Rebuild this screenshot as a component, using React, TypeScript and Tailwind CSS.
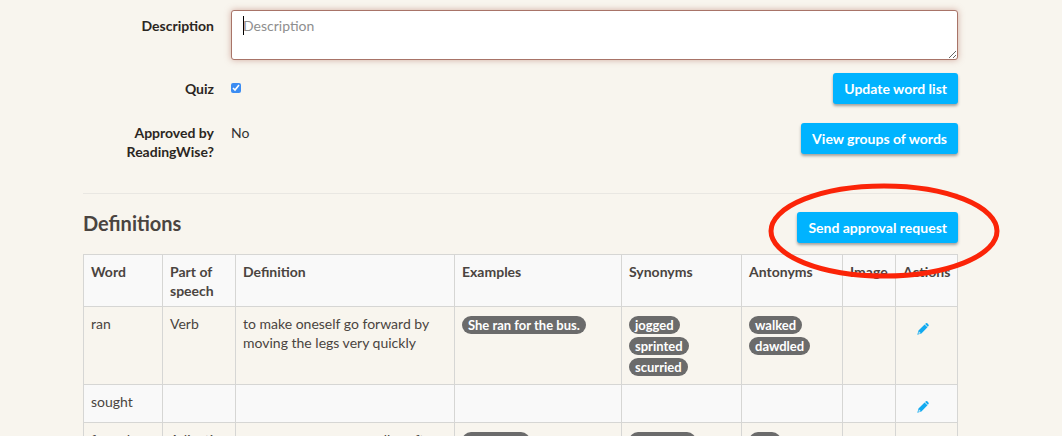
import type { ReactNode } from "react";

const entries = [
  {
    word: "ran",
    part: "Verb",
    definition: "to make oneself go forward by moving the legs very quickly",
    examples: ["She ran for the bus."],
    synonyms: ["jogged", "sprinted", "scurried"],
    antonyms: ["walked", "dawdled"],
  },
  {
    word: "sought",
    part: "",
    definition: "",
    examples: [],
    synonyms: [],
    antonyms: [],
  },
  {
    word: "feared",
    part: "Adjective",
    definition: "nervous or even mentally soft",
    examples: ["for a duet"],
    synonyms: ["unnerved"],
    antonyms: ["hot"],
  },
];

function Button({ children }: { children: ReactNode }) {
  return (
    <button
      type="button"
      className="h-[31px] rounded-[3px] bg-[#00b3ff] px-[11px] text-sm font-bold text-white shadow-[0_2px_3px_rgba(0,0,0,0.35)]"
    >
      {children}
    </button>
  );
}

function Tags({ items }: { items: string[] }) {
  return (
    <div className="flex flex-col items-start gap-[3px] pt-[2px]">
      {items.map((item) => (
        <span
          key={item}
          className="rounded-[9px] bg-[#6b6b6b] px-[6px] text-[13px] leading-[18px] font-bold whitespace-nowrap text-white"
        >
          {item}
        </span>
      ))}
    </div>
  );
}

function Pencil() {
  return (
    <svg viewBox="0 0 12 12" className="size-3" aria-hidden="true">
      <path
        fill="#12aaf0"
        fillRule="evenodd"
        d="M8.1.9 8.9.3Q9.8-.2 10.6.6l.8.8q.7.8.1 1.6l-.7.8ZM7.6 1.4l2.9 2.9-6.1 6.1L.3 11.7l1.2-4.2ZM1.9 8.7l-.5 1.7.4.4 1.6-.5-.1-.7-.8-.1-.1-.7Z"
      />
    </svg>
  );
}

export default function App() {
  return (
    <div className="h-screen overflow-hidden bg-[#f8f5ee] pt-[10px] pr-[104px] pl-[83px] font-[Lato,sans-serif] text-sm leading-[19px] text-[#4a4440]">
      <form className="grid grid-cols-[131px_1fr_auto] gap-x-[17px] text-[#333]">
        <label
          htmlFor="description"
          className="pt-[6px] text-right font-bold text-[#2b2622]"
        >
          Description
        </label>
        <div className="relative col-span-2">
          <textarea
            id="description"
            placeholder="Description"
            className="block h-[50px] w-full resize rounded-[3px] border border-[#a87468] bg-white px-[11px] py-[5px] shadow-[0_0_6px_rgba(176,100,85,0.5)] outline-none placeholder:text-[#8e8e8e]"
          />
          <span className="absolute top-[6px] left-3 h-[19px] w-px bg-black" />
        </div>

        <label
          htmlFor="quiz"
          className="mt-[13px] pt-[6px] text-right font-bold text-[#2b2622]"
        >
          Quiz
        </label>
        <div className="mt-[13px] pt-[10px]">
          <input
            id="quiz"
            type="checkbox"
            defaultChecked
            className="block size-[10px] accent-[#3b8cf2]"
          />
        </div>
        <div className="mt-[13px] text-right">
          <Button>Update word list</Button>
        </div>

        <div className="mt-[19px] text-right font-bold text-[#2b2622]">
          Approved by ReadingWise?
        </div>
        <div className="mt-[19px]">No</div>
        <div className="mt-[19px] text-right">
          <Button>View groups of words</Button>
        </div>
      </form>

      <hr className="mt-8 border-[#e9e7e2]" />

      <div className="mt-[18px] flex items-start justify-between">
        <h2 className="text-xl leading-[22px] font-bold">Definitions</h2>
        <div className="relative">
          <Button>Send approval request</Button>
          <svg
            viewBox="0 0 232 98"
            className="pointer-events-none absolute -top-[30px] -right-[42px] h-[98px] w-[232px]"
            aria-hidden="true"
          >
            <ellipse
              cx="116"
              cy="49"
              rx="113"
              ry="45"
              fill="none"
              stroke="#fb2408"
              strokeWidth="5"
            />
          </svg>
        </div>
      </div>

      <table className="mt-[11px] w-full table-fixed border-collapse [&_td]:border [&_td]:border-[#d6d6d4] [&_td]:px-[7px] [&_td]:pt-[7px] [&_td]:pb-2 [&_td]:align-top [&_th]:border [&_th]:border-[#d6d6d4] [&_th]:px-[7px] [&_th]:pt-[7px] [&_th]:pb-[6px] [&_th]:text-left [&_th]:align-top">
        <thead>
          <tr className="bg-[#f9f9f9]">
            <th className="w-[79px]">Word</th>
            <th className="w-[73px]">Part of speech</th>
            <th>Definition</th>
            <th className="w-[167px]">Examples</th>
            <th className="w-[120px]">Synonyms</th>
            <th className="w-[101px]">Antonyms</th>
            <th className="w-[53px]">Image</th>
            <th className="w-[62px]">Actions</th>
          </tr>
        </thead>
        <tbody>
          {entries.map((entry) => (
            <tr key={entry.word} className="even:bg-[#f9f9f9]">
              <td>{entry.word}</td>
              <td>{entry.part}</td>
              <td>{entry.definition}</td>
              <td>
                <Tags items={entry.examples} />
              </td>
              <td>
                <Tags items={entry.synonyms} />
              </td>
              <td>
                <Tags items={entry.antonyms} />
              </td>
              <td />
              <td>
                <a
                  href="#edit"
                  aria-label={`Edit ${entry.word}`}
                  className="flex justify-center pt-[9px] pr-2 pb-px"
                >
                  <Pencil />
                </a>
              </td>
            </tr>
          ))}
        </tbody>
      </table>
    </div>
  );
}
